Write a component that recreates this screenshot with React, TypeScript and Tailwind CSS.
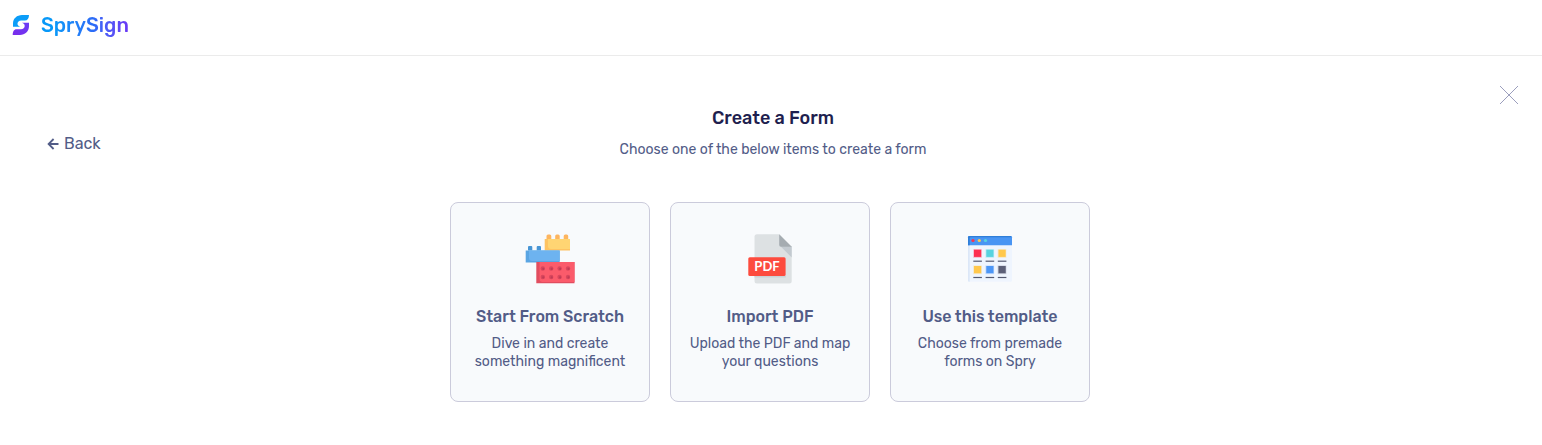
import type { ReactNode } from 'react';

interface FormOption {
  title: string;
  lines: string[];
  icon: ReactNode;
}

function Logo() {
  return (
    <svg width="18" height="22" viewBox="0 0 18 22" aria-hidden="true">
      <defs>
        <linearGradient id="logo-bottom" x1="0" y1="1" x2="1" y2="0">
          <stop offset="0" stopColor="#7a2bea" />
          <stop offset="1" stopColor="#6a3cf6" />
        </linearGradient>
      </defs>
      <path
        d="M17 1H10C5 1 1 4.500 1 9.500v3.300h7.300C6.500 12.200 5.500 11.200 5.500 9.800c0-1.900 1.500-3.300 3.700-3.300h3.600C15.500 6.500 17 4.500 17 1Z"
        fill="#0b9df8"
      />
      <path
        d="M.7 21H8c5 0 9-3.500 9-8.700V8.800H9.900c1.800.6 2.800 1.600 2.800 3.100 0 1.900-1.500 3.300-3.700 3.300H4.500C2 15.200.7 17.500.7 21Z"
        fill="url(#logo-bottom)"
      />
    </svg>
  );
}

function BricksIcon() {
  return (
    <svg width="50" height="50" viewBox="10 9 50 50" aria-hidden="true">
      <path
        d="M31.500 14v-3a1.500 1.500 0 0 1 1.500-1.500h1.800a1.500 1.500 0 0 1 1.500 1.500v3h3.900v-3a1.500 1.500 0 0 1 1.500-1.500h1.500a1.500 1.500 0 0 1 1.500 1.500v3h4v-3a1.500 1.500 0 0 1 1.500-1.500h1.500a1.500 1.500 0 0 1 1.500 1.500v3Z"
        fill="#fdb55f"
      />
      <path d="M29.700 14H55v11.500H29.700Z" fill="#fec362" />
      <path d="M33 14h22v10H36q-3 0-3-3Z" fill="#ffd573" />
      <path
        d="M13 25.500V22a1 1 0 0 1 1-1h2.300a1 1 0 0 1 1 1v3.500h4.400V22a1 1 0 0 1 1-1H25a1 1 0 0 1 1 1v3.500Z"
        fill="#4795d5"
      />
      <path d="M10.700 25.500h34v12h-34Z" fill="#5aa5e3" />
      <path d="M14 25.500h30.700V36H17q-3 0-3-3Z" fill="#6db3f0" />
      <path d="M21.300 37H59.500v21.300H21.300Z" fill="#e14d5f" />
      <path d="M24.500 37H59.500v20H27.500q-3 0-3-3Z" fill="#fb5b6b" />
      {[43.500, 52].map((cy) =>
        [27.800, 36.200, 44.600, 53].map((cx) => (
          <g key={`${cx}-${cy}`}>
            <circle cx={cx} cy={cy} r="2.200" fill="#d9475d" />
            <circle cx={cx + 0.5} cy={cy + 0.4} r="1.100" fill="#c13b55" />
          </g>
        ))
      )}
    </svg>
  );
}

function PdfIcon() {
  return (
    <svg width="50" height="50" viewBox="10 9 50 50" aria-hidden="true">
      <path
        d="M22 9.300h22.200L56.700 21.700V56a2.500 2.500 0 0 1-2.500 2.500H22a2.500 2.500 0 0 1-2.500-2.500V11.800A2.500 2.500 0 0 1 22 9.300Z"
        fill="#dde1e3"
      />
      <path d="M45.500 21.200 56.700 32.500V21.200Z" fill="#c3cad0" />
      <path d="M44.200 9.300 56.700 21.700H46a1.800 1.800 0 0 1-1.800-1.800Z" fill="#a5acb1" />
      <path d="M19.500 51h31.300v1.500H19.500Z" fill="#cbd1d5" />
      <rect x="13.300" y="32.300" width="37.300" height="18.700" rx="1.500" fill="#fd4b3e" />
      <text
        x="32"
        y="46"
        textAnchor="middle"
        fill="#fff"
        className="font-['Lato',sans-serif] text-[13px] font-bold"
      >
        PDF
      </text>
    </svg>
  );
}

const swatches = [
  { x: 19, y: 24.700, color: '#fd3050' },
  { x: 31.300, y: 24.700, color: '#57d3df' },
  { x: 43.500, y: 24.700, color: '#ffc84d' },
  { x: 19, y: 41, color: '#ffc84d' },
  { x: 31.300, y: 41, color: '#4c96f6' },
  { x: 43.500, y: 41, color: '#5c6078' },
];

function TemplateIcon() {
  return (
    <svg width="50" height="50" viewBox="10 9 50 50" aria-hidden="true">
      <path d="M13 19h44v36.500a1.200 1.200 0 0 1-1.200 1.200H14.200a1.200 1.200 0 0 1-1.200-1.200Z" fill="#eff5fe" />
      <path d="M13 19h1.700v37.700h-.5a1.200 1.200 0 0 1-1.200-1.200Z" fill="#dce7f7" />
      <path d="M13 20.300v-8a1.300 1.300 0 0 1 1.300-1.300h41.400a1.300 1.300 0 0 1 1.300 1.300v8Z" fill="#4995f3" />
      <path d="M13 20.300v-8a1.300 1.300 0 0 1 1.300-1.300h41.400l.8.500-.5.700H16q-1.300 0-1.300 1.300v6.800Z" fill="#2f7ed8" />
      <circle cx="18" cy="15.500" r="1.600" fill="#fd3050" />
      <circle cx="24.300" cy="15.500" r="1.600" fill="#ffc84d" />
      <circle cx="30.500" cy="15.500" r="1.600" fill="#57d3df" />
      {swatches.map(({ x, y, color }) => (
        <g key={`${x}-${y}`}>
          <rect x={x - 0.8} y={y - 0.5} width="8.600" height="8.600" fill={color} opacity="0.300" />
          <rect x={x} y={y} width="7.200" height="7.200" fill={color} />
          <path d={`M${x - 0.7} ${y + 11.5}h8.600`} stroke="#545970" strokeWidth="1.200" />
        </g>
      ))}
    </svg>
  );
}

const options: FormOption[] = [
  {
    title: 'Start From Scratch',
    lines: ['Dive in and create', 'something magnificent'],
    icon: <BricksIcon />,
  },
  {
    title: 'Import PDF',
    lines: ['Upload the PDF and map', 'your questions'],
    icon: <PdfIcon />,
  },
  {
    title: 'Use this template',
    lines: ['Choose from premade', 'forms on Spry'],
    icon: <TemplateIcon />,
  },
];

export default function App() {
  return (
    <div className="min-h-screen bg-white font-['Rubik',Roboto,sans-serif] text-[#525c87]">
      <header className="flex h-14 items-center border-b border-[#ebebeb] px-3 pb-1.5">
        <a href="/" className="flex items-center gap-[11px]">
          <Logo />
          <span className="bg-linear-to-r from-[#0798f8] from-15% via-[#2b6bf7] via-60% to-[#6a35f5] bg-clip-text text-[20px] leading-7 font-medium text-transparent">
            SprySign
          </span>
        </a>
      </header>

      <main className="pb-10">
        <div className="grid grid-cols-[1fr_auto_1fr] items-start pt-7 pl-1">
          <button type="button" className="mt-12 ml-[43px] flex items-center gap-[5px] justify-self-start text-[16px] leading-6">
            <svg
              width="12"
              height="12"
              viewBox="0 0 12 12"
              fill="none"
              stroke="currentColor"
              strokeWidth="1.800"
              aria-hidden="true"
            >
              <path d="M11.500 6H2M6.600 1 1.600 6 6.600 11" />
            </svg>
            Back
          </button>

          <div className="pt-5 text-center">
            <h1 className="text-[18px] leading-7 font-medium text-[#1f1f4f]">Create a Form</h1>
            <p className="mt-2 text-[14px] leading-5">Choose one of the below items to create a form</p>
          </div>

          <button type="button" aria-label="Close" className="mt-0.5 mr-6 justify-self-end">
            <svg width="18" height="18" viewBox="0 0 18 18" stroke="#9b9ebd" strokeWidth="1" aria-hidden="true">
              <path d="M0 0 18 18M18 0 0 18" />
            </svg>
          </button>
        </div>

        <div className="mt-[42px] flex flex-wrap justify-center gap-5 pr-0.5">
          {options.map(({ title, lines, icon }) => (
            <button
              key={title}
              type="button"
              className="flex min-h-[200px] w-[200px] flex-col items-center rounded-lg border border-[#cbcbdb] bg-[#f8fafc] pt-[31px] pb-6"
            >
              {icon}
              <span className="mt-[21px] text-[16px] leading-6 font-medium">{title}</span>
              <span className="mt-1.5 text-[14px] leading-[18px]">
                {lines.map((line) => (
                  <span key={line} className="block">
                    {line}
                  </span>
                ))}
              </span>
            </button>
          ))}
        </div>
      </main>
    </div>
  );
}
